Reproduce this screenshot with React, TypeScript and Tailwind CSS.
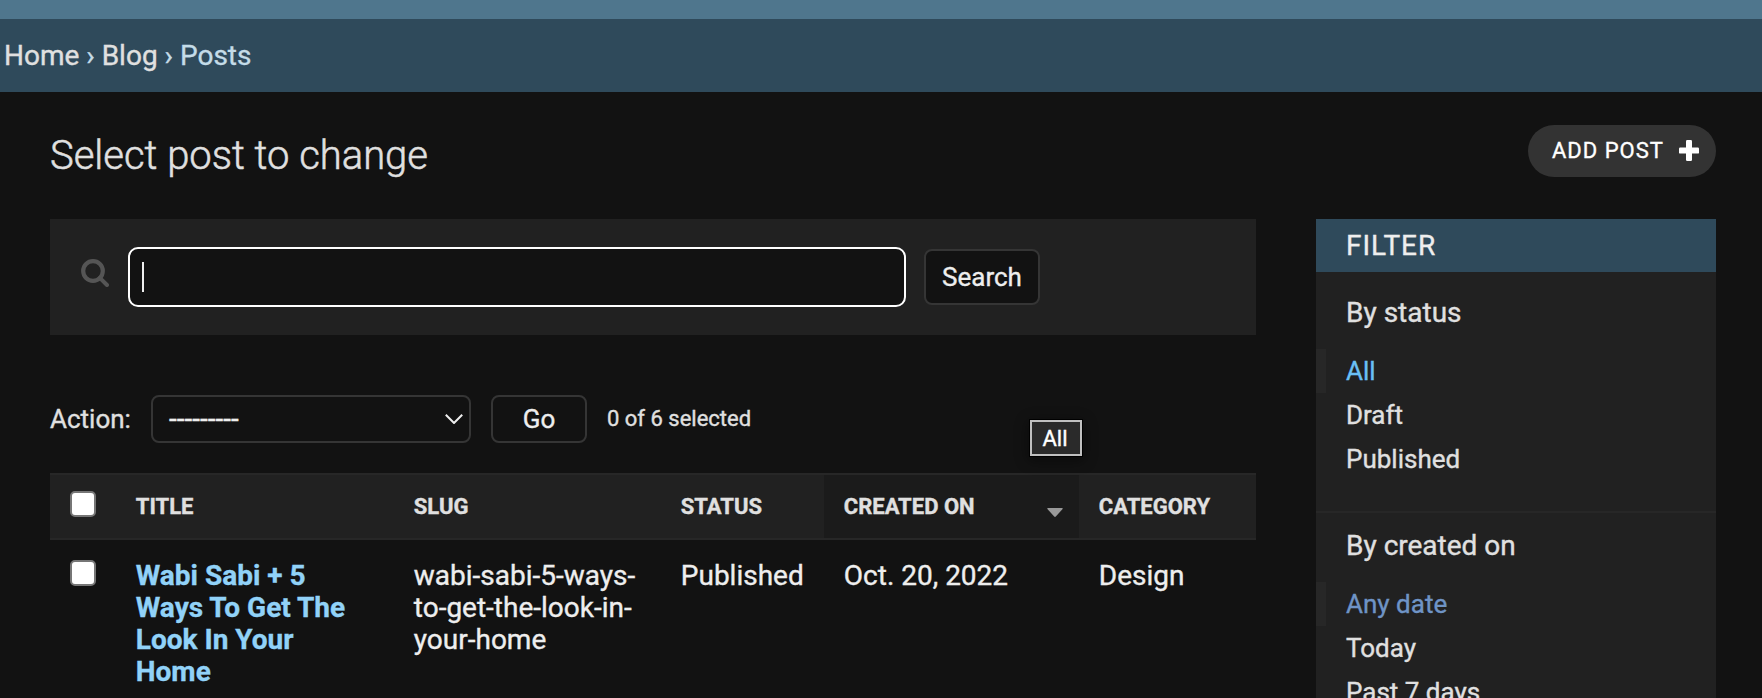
import React from "react";

const columns = "grid grid-cols-[66px_278px_267px_163px_255px_177px]";

function Checkbox() {
  return (
    <span
      role="checkbox"
      aria-checked="false"
      className="block size-[26px] rounded-[5px] border-2 border-[#767676] bg-white"
    />
  );
}

function HeaderCell({ label, sorted = false }: { label: string; sorted?: boolean }) {
  return (
    <div
      className={
        sorted
          ? "flex items-center justify-between bg-[#1b1b1b] pr-4 pl-[19.8px]"
          : "flex items-center px-[19.8px]"
      }
    >
      <span>{label}</span>
      {sorted && (
        <svg viewBox="0 0 16 9" className="mt-[11px] h-[9px] w-4" fill="#999999">
          <path d="M1 0H15Q16.4 0.2 15.4 1.2L8.8 8.5Q8 9.3 7.2 8.5L0.6 1.2Q-0.4 0.2 1 0Z" />
        </svg>
      )}
    </div>
  );
}

function FilterGroup({
  title,
  items,
  selectedClass,
}: {
  title: string;
  items: string[];
  selectedClass: string;
}) {
  return (
    <div>
      <h3 className="pl-[30px] text-[28px] leading-8">{title}</h3>
      <ul className="mt-[20.5px] text-[26px] leading-[44px]">
        {items.map((item, i) => (
          <li
            key={item}
            className={
              i === 0
                ? `border-l-[10px] border-[#272727] pl-5 ${selectedClass}`
                : "pl-[30px]"
            }
          >
            {item}
          </li>
        ))}
      </ul>
    </div>
  );
}

export default function App() {
  return (
    <div className="relative h-[698px] w-[1762px] overflow-hidden bg-[#121212] font-['Roboto',sans-serif] text-[26px] text-[#e0e0e0] [-webkit-text-stroke:0.35px]">
      <div className="h-[19px] bg-[#4f768d]" />
      <nav className="flex h-[73px] items-center bg-[#2f4a5b] pl-1 text-[28px] whitespace-pre text-[#c4dce8]">
        <span className="text-[#e0e0e0]">Home</span>
        <span> › </span>
        <span className="text-[#e0e0e0]">Blog</span>
        <span> › Posts</span>
      </nav>

      <div className="flex h-[127px] items-start justify-between pr-[46px] pl-[50px]">
        <h1 className="mt-11 text-[40px] leading-10 font-light tracking-[-0.02px] [-webkit-text-stroke:0.5px]">
          Select post to change
        </h1>
        <button className="mt-[33px] flex h-[52px] w-[188px] items-center justify-between rounded-full bg-[#333333] pr-[17px] pl-6 text-[22px] tracking-[1px] text-white">
          <span className="mb-0.5">ADD POST</span>
          <svg viewBox="0 0 20 21" className="mb-0.5 h-[21px] w-5" fill="#ffffff">
            <rect x="7" y="0" width="6" height="21" rx="1.2" />
            <rect x="0" y="7.4" width="20" height="6.2" rx="1.2" />
          </svg>
        </button>
      </div>

      <div className="flex items-start gap-[60px] pl-[50px]">
        <main className="w-[1206px]">
          <div className="flex h-[116px] items-center bg-[#212121] pl-[31px]">
            <svg
              viewBox="0 0 28 28"
              className="mr-[19px] mb-2 size-7"
              fill="none"
              stroke="#555555"
              strokeWidth="4.2"
            >
              <circle cx="12" cy="12" r="9.8" />
              <path d="M18.8 18.8L26 26" strokeLinecap="round" strokeWidth="4" />
            </svg>
            <div className="flex h-[60px] w-[778px] items-center rounded-[10px] border-2 border-white bg-[#121212] pl-3">
              <span className="h-[30px] w-0.5 bg-[#eeeeee]" />
            </div>
            <button className="ml-[18px] h-[56px] w-[116px] rounded-lg border-2 border-[#353535] bg-[#121212] text-[#eeeeee]">
              Search
            </button>
          </div>

          <div className="mt-[60px] flex h-12 items-center">
            <span className="w-[101px]">Action:</span>
            <div className="flex h-12 w-[320px] items-center justify-between rounded-lg border-2 border-[#353535] pr-1.5 pl-4 text-[#eeeeee]">
              <span className="text-[28px]">---------</span>
              <svg
                viewBox="0 0 18 10"
                className="h-2.5 w-[18px]"
                fill="none"
                stroke="#eeeeee"
                strokeWidth="2"
              >
                <path d="M0.8 0.8L9 9L17.2 0.8" />
              </svg>
            </div>
            <button className="ml-5 h-12 w-24 rounded-lg border-2 border-[#353535] text-[#eeeeee]">
              Go
            </button>
            <span className="mb-0.5 ml-5 text-[22px]">0 of 6 selected</span>
          </div>

          <div
            className={`${columns} mt-[30px] h-[67px] border-y-2 border-[#272727] bg-[#212121] text-[22px] font-bold`}
          >
            <div className="pt-4 pl-5">
              <Checkbox />
            </div>
            <HeaderCell label="TITLE" />
            <HeaderCell label="SLUG" />
            <HeaderCell label="STATUS" />
            <HeaderCell label="CREATED ON" sorted />
            <HeaderCell label="CATEGORY" />
          </div>

          <div className={`${columns} pt-5 text-[28px] leading-8 text-[#eeeeee]`}>
            <div className="pl-5">
              <Checkbox />
            </div>
            <a className="pl-[19.8px] font-bold whitespace-nowrap text-[#91d2f8]">
              Wabi Sabi + 5
              <br />
              Ways To Get The
              <br />
              Look In Your
              <br />
              Home
            </a>
            <div className="pl-[19.8px] whitespace-nowrap">
              wabi-sabi-5-ways-
              <br />
              to-get-the-look-in-
              <br />
              your-home
            </div>
            <div className="pl-[19.8px]">Published</div>
            <div className="pl-[19.8px]">Oct. 20, 2022</div>
            <div className="pl-[19.8px]">Design</div>
          </div>
        </main>

        <aside className="h-[479px] w-[400px] bg-[#212121]">
          <h2 className="flex h-[53px] items-center bg-[#2f4a5b] pl-[30px] text-[28px] tracking-[1px] text-[#eeeeee]">
            FILTER
          </h2>
          <div className="h-[241px] border-b-2 border-[#272727] pt-[24.5px]">
            <FilterGroup
              title="By status"
              items={["All", "Draft", "Published"]}
              selectedClass="text-[#6ac0f5]"
            />
          </div>
          <div className="pt-[16.5px]">
            <FilterGroup
              title="By created on"
              items={["Any date", "Today", "Past 7 days"]}
              selectedClass="text-[#6f94c6]"
            />
          </div>
        </aside>
      </div>

      <div className="absolute top-[420px] left-[1030px] flex h-9 w-[52px] items-center justify-center border-2 border-[#c0c0c0] bg-[#2a2a2a] pr-0.5 text-[22px] text-white shadow-[0_0_0_1px_#000000,0_3px_12px_2px_rgba(0,0,0,0.4)]">
        All
      </div>
    </div>
  );
}
